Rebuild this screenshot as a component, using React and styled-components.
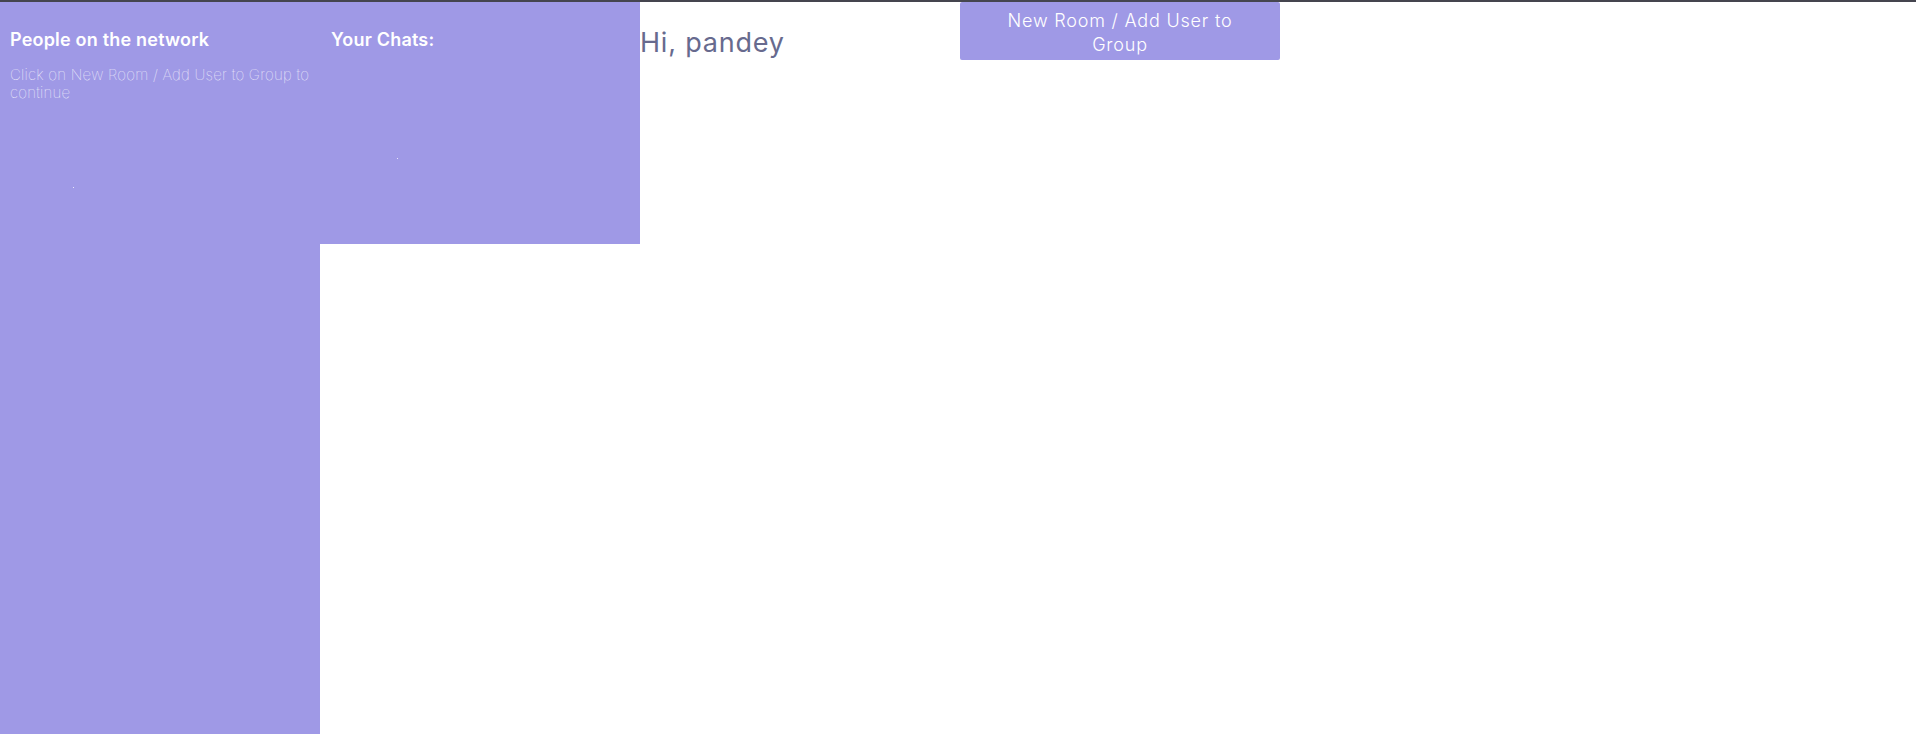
import React from "react";
import styled, { createGlobalStyle } from "styled-components";

const Global = createGlobalStyle`
  html, body { margin: 0; padding: 0; background: #ffffff; }
  body {
    font-family: Inter, "Noto Sans", sans-serif;
    border-top: 2px solid #45454f;
    height: 734px;
    overflow: hidden;
  }
  * { box-sizing: border-box; }
`;

const PURPLE = "#9f99e6";

const Page = styled.div`
  display: flex;
  align-items: flex-start;
  height: 734px;
`;

const Panel = styled.section`
  position: relative;
  width: 320px;
  flex: 0 0 320px;
  height: ${(p) => p.$h};
  background: ${PURPLE};
  padding: 27px 10px 0 10px;
`;

const PanelTitle = styled.h3`
  margin: 0;
  font-size: 18px;
  line-height: 22px;
  font-weight: 600;
  color: #ffffff;
  letter-spacing: 0.2px;
  padding-left: ${(p) => p.$indent || 0}px;
`;

const Hint = styled.p`
  margin: 15px 0 0 0;
  font-size: 15px;
  line-height: 17.5px;
  font-weight: 100;
  color: #ffffff;
  letter-spacing: 0.25px;
`;

const Dot = styled.span`
  position: absolute;
  width: 1px;
  height: 1px;
  background: #e8e6fb;
  left: ${(p) => p.$x}px;
  top: ${(p) => p.$y}px;
`;

const Greeting = styled.h2`
  width: 320px;
  flex: 0 0 320px;
  margin: 24px 0 0 0;
  font-size: 27px;
  line-height: 34px;
  font-weight: 400;
  color: #676a8e;
  letter-spacing: 0.8px;
`;

const Actions = styled.div`
  width: 320px;
  flex: 0 0 320px;
`;

const NewRoomButton = styled.button`
  display: block;
  width: 320px;
  height: 58px;
  border: none;
  border-radius: 2px;
  background: ${PURPLE};
  color: #ffffff;
  font-family: Inter, "Noto Sans", sans-serif;
  font-size: 18px;
  line-height: 24px;
  font-weight: 300;
  letter-spacing: 0.8px;
  padding: 7px 44px 3px;
  text-align: center;
  cursor: pointer;
`;

export default function App() {
  return (
    <>
      <Global />
      <Page>
        <Panel $h="734px">
          <PanelTitle>People on the network</PanelTitle>
          <Hint>Click on New Room / Add User to Group to continue</Hint>
          <Dot $x={73} $y={185} />
        </Panel>
        <Panel $h="242px">
          <PanelTitle $indent={1}>Your Chats:</PanelTitle>
          <Dot $x={77} $y={156} />
        </Panel>
        <Greeting>Hi, pandey</Greeting>
        <Actions>
          <NewRoomButton>New Room / Add User to Group</NewRoomButton>
        </Actions>
      </Page>
    </>
  );
}
